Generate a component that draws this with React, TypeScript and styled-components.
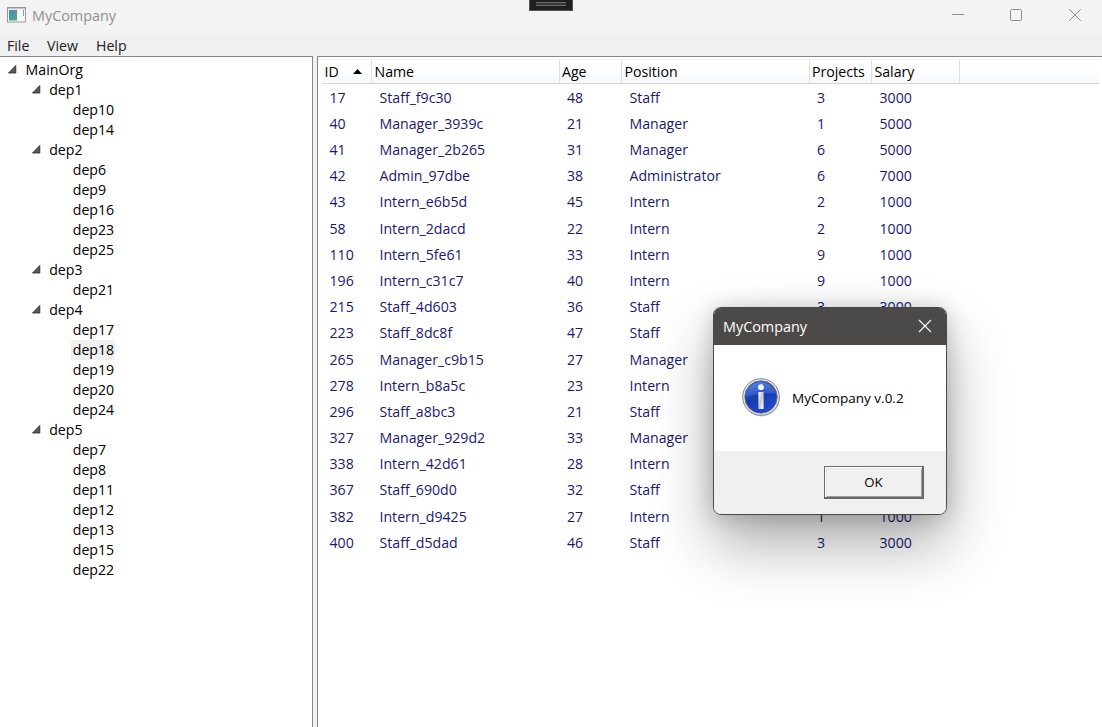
import React from "react";
import styled, { createGlobalStyle } from "styled-components";

const Global = createGlobalStyle`
  * { box-sizing: border-box; }
  html, body { margin: 0; padding: 0; overflow: hidden; }
  body { font-family: "Open Sans", "Noto Sans", sans-serif; font-size: 14.15px; color: #000; background: #f0f0f0; }
`;

const Window = styled.div`
  position: relative;
  display: flex;
  flex-direction: column;
  width: 1102px;
  height: 727px;
  overflow: hidden;
  background: #f0f0f0;
`;

const TitleBar = styled.header`
  display: flex;
  flex: 0 0 34px;
  height: 34px;
  padding-left: 7px;
  background: #f3f3f3;
  color: #919191;
`;

const AppIcon = styled.svg`
  display: block;
  flex: none;
  width: 19px;
  height: 16px;
  margin-top: 7px;
`;

const Title = styled.span`
  flex: 1;
  margin-left: 6px;
  line-height: 31px;
  font-size: 14.4px;
`;

const CaptionButtons = styled.div`
  display: flex;
  width: 176px;
  height: 30px;
  margin-right: -3px;
`;

const CaptionButton = styled.button<{ $width?: number }>`
  display: flex;
  align-items: center;
  justify-content: center;
  flex: 0 0 ${(p) => p.$width ?? 58}px;
  padding: 0;
  border: 0;
  background: none;
`;

const Glyph = styled.svg`
  display: block;
  width: 14px;
  height: 14px;
  fill: none;
`;

const DebugTab = styled.div`
  position: absolute;
  top: 0;
  left: 529px;
  width: 44px;
  height: 11px;
  padding: 2px 6px 0;
  border: 1px solid #555352;
  border-top: 0;
  background: #1f1f1f;
`;

const Grip = styled.div`
  height: 4px;
  border: solid #6c6c6c;
  border-width: 1px 0;
  background: #3a3a3a;
`;

const MenuBar = styled.nav`
  display: flex;
  flex: 0 0 22px;
  gap: 18px;
  height: 22px;
  padding-left: 7px;
  line-height: 23px;
  color: #212121;
`;

const MenuItem = styled.span<{ $width: number }>`
  width: ${(p) => p.$width}px;
  height: 22px;
  white-space: nowrap;
`;

const Body = styled.main`
  display: flex;
  flex: 1;
  min-height: 0;
  gap: 4px;
`;

const TreePane = styled.aside`
  flex: 0 0 313px;
  padding-top: 3px;
  border: solid #828790;
  border-width: 1px 1px 0 0;
  background: #fff;
`;

const TreeRow = styled.div<{ $level: number }>`
  display: flex;
  height: 20px;
  padding-left: ${(p) => 7 + p.$level * 23.6}px;
  line-height: 20px;
`;

const Expander = styled.svg`
  display: block;
  width: 16px;
  height: 20px;
  flex: none;
`;

const TreeLabel = styled.span<{ $selected?: boolean }>`
  height: 20px;
  margin-left: 1px;
  padding: 0 1px 0 1.6px;
  background: ${(p) => (p.$selected ? "#f0f0f0" : "transparent")};
`;

const ListPane = styled.section`
  flex: 1;
  min-width: 0;
  padding: 2px 3px 0 4px;
  border: solid #828790;
  border-width: 1px 0 0 1px;
  background: #fff;
`;

const columns = "50px 187.5px 62.5px 187.5px 62.5px 87.5px 1fr";

const HeaderRow = styled.div`
  display: grid;
  grid-template-columns: ${columns};
  height: 25px;
  border-top: 1px solid #f0f1f2;
  border-bottom: 1px solid #d5d5d5;
  background: linear-gradient(#fff 0%, #fff 40%, #f7f8fa 100%);
`;

const HeaderCell = styled.div<{ $last?: boolean }>`
  display: flex;
  align-items: center;
  padding-left: 2.5px;
  border-right: ${(p) => (p.$last ? 0 : "1px solid #dfe0e1")};
  line-height: 23px;
  white-space: nowrap;
`;

const SortArrow = styled.svg`
  display: block;
  width: 9px;
  height: 5px;
  margin-left: 14px;
`;

const Rows = styled.div`
  padding-top: 0.63px;
`;

const Row = styled.div`
  display: grid;
  grid-template-columns: ${columns};
  height: 26.2px;
  color: #191970;
  line-height: 26.5px;
`;

const Cell = styled.span`
  padding-left: 7.5px;
  white-space: nowrap;
`;

const Dialog = styled.div`
  position: absolute;
  top: 307px;
  left: 713px;
  display: flex;
  flex-direction: column;
  width: 234px;
  height: 208px;
  overflow: hidden;
  border: 1px solid #4c4a48;
  border-radius: 8px;
  background: #fff;
  box-shadow: 0 30px 60px rgba(0, 0, 0, 0.32), 0 2px 22px rgba(0, 0, 0, 0.2);
`;

const DialogTitle = styled.div`
  display: flex;
  flex: 0 0 37px;
  align-items: center;
  justify-content: space-between;
  padding: 0 14px 0 9px;
  background: #4c4a48;
  color: #fff;
  font-size: 14.4px;
`;

const DialogClose = styled(Glyph)`
  margin-bottom: 2px;
`;

const DialogContent = styled.div`
  display: flex;
  flex: 0 0 106px;
  align-items: center;
  padding-left: 27px;
  font-size: 13.5px;
`;

const InfoIcon = styled.svg`
  display: block;
  width: 40px;
  height: 40px;
  margin-bottom: 2px;
`;

const Message = styled.span`
  margin-left: 11px;
`;

const DialogFooter = styled.div`
  display: flex;
  flex: 1;
  justify-content: flex-end;
  padding: 15px 22px 0 0;
  background: #f0f0f0;
`;

const OkButton = styled.button`
  width: 100px;
  height: 33px;
  padding: 0 0 1px;
  border: solid #696969;
  border-width: 1px 2px 2px 1px;
  background: #f0f0f0;
  box-shadow: inset 1px 1px 0 #fff, inset 2px 2px 0 #e3e3e3, inset -1px -1px 0 #a0a0a0;
  color: #000;
  font: 13.2px "Open Sans", "Noto Sans", sans-serif;
`;

const tree: [string, string[]][] = [
  ["dep1", ["dep10", "dep14"]],
  ["dep2", ["dep6", "dep9", "dep16", "dep23", "dep25"]],
  ["dep3", ["dep21"]],
  ["dep4", ["dep17", "dep18", "dep19", "dep20", "dep24"]],
  ["dep5", ["dep7", "dep8", "dep11", "dep12", "dep13", "dep15", "dep22"]],
];

type Employee = [number, string, number, string, number?, number?];

const staff: Employee[] = [
  [17, "Staff_f9c30", 48, "Staff", 3, 3000],
  [40, "Manager_3939c", 21, "Manager", 1, 5000],
  [41, "Manager_2b265", 31, "Manager", 6, 5000],
  [42, "Admin_97dbe", 38, "Administrator", 6, 7000],
  [43, "Intern_e6b5d", 45, "Intern", 2, 1000],
  [58, "Intern_2dacd", 22, "Intern", 2, 1000],
  [110, "Intern_5fe61", 33, "Intern", 9, 1000],
  [196, "Intern_c31c7", 40, "Intern", 9, 1000],
  [215, "Staff_4d603", 36, "Staff", 3, 3000],
  [223, "Staff_8dc8f", 47, "Staff"],
  [265, "Manager_c9b15", 27, "Manager"],
  [278, "Intern_b8a5c", 23, "Intern"],
  [296, "Staff_a8bc3", 21, "Staff"],
  [327, "Manager_929d2", 33, "Manager"],
  [338, "Intern_42d61", 28, "Intern"],
  [367, "Staff_690d0", 32, "Staff"],
  [382, "Intern_d9425", 27, "Intern", 1, 1000],
  [400, "Staff_d5dad", 46, "Staff", 3, 3000],
];

function Arrow() {
  return (
    <Expander viewBox="0 0 16 20">
      <path d="M8.8 5.5V13H1.5Z" fill="#595959" stroke="#262626" strokeWidth="0.8" />
    </Expander>
  );
}

export default function App() {
  return (
    <Window>
      <Global />
      <TitleBar>
        <AppIcon viewBox="0 0 19 16">
          <defs>
            <linearGradient id="app" x1="0" y1="0" x2="1" y2="1">
              <stop offset="0" stopColor="#4d87b8" />
              <stop offset="1" stopColor="#50ad7c" />
            </linearGradient>
          </defs>
          <rect x="0.5" y="0.5" width="18" height="14.5" fill="#f7f8f9" stroke="#969a9e" />
          <path d="M1 1.7H18" stroke="#b9bdc2" />
          <rect x="2" y="3" width="8" height="10.5" fill="url(#app)" />
          <rect x="11" y="3" width="3.5" height="10.5" fill="#fff" />
          <path d="M16.5 3V9" stroke="#76a9a1" />
        </AppIcon>
        <Title>MyCompany</Title>
        <CaptionButtons>
          <CaptionButton aria-label="Minimize">
            <Glyph viewBox="0 0 14 14"><path d="M1 6.5H13" stroke="#8e8e8e" /></Glyph>
          </CaptionButton>
          <CaptionButton aria-label="Maximize">
            <Glyph viewBox="0 0 14 14"><rect x="1.5" y="1.5" width="11" height="11" rx="1" stroke="#8e8e8e" /></Glyph>
          </CaptionButton>
          <CaptionButton $width={60} aria-label="Close">
            <Glyph viewBox="0 0 14 14"><path d="M1.2 1.2L12.8 12.8M12.8 1.2L1.2 12.8" stroke="#8e8e8e" /></Glyph>
          </CaptionButton>
        </CaptionButtons>
      </TitleBar>
      <MenuBar>
        <MenuItem $width={22}>File</MenuItem>
        <MenuItem $width={31}>View</MenuItem>
        <MenuItem $width={31}>Help</MenuItem>
      </MenuBar>
      <Body>
        <TreePane>
          <TreeRow $level={0}><Arrow /><TreeLabel>MainOrg</TreeLabel></TreeRow>
          {tree.map(([name, children]) => (
            <React.Fragment key={name}>
              <TreeRow $level={1}><Arrow /><TreeLabel>{name}</TreeLabel></TreeRow>
              {children.map((c) => (
                <TreeRow key={c} $level={2}>
                  <Expander />
                  <TreeLabel $selected={c === "dep18"}>{c}</TreeLabel>
                </TreeRow>
              ))}
            </React.Fragment>
          ))}
        </TreePane>
        <ListPane>
          <HeaderRow>
            <HeaderCell>
              ID
              <SortArrow viewBox="0 0 9 5"><path d="M0 5L4.5 0L9 5Z" fill="#000" /></SortArrow>
            </HeaderCell>
            <HeaderCell>Name</HeaderCell>
            <HeaderCell>Age</HeaderCell>
            <HeaderCell>Position</HeaderCell>
            <HeaderCell>Projects</HeaderCell>
            <HeaderCell>Salary</HeaderCell>
            <HeaderCell $last />
          </HeaderRow>
          <Rows>
            {staff.map((row) => (
              <Row key={row[0]}>
                {row.map((value, i) => <Cell key={i}>{value}</Cell>)}
              </Row>
            ))}
          </Rows>
        </ListPane>
      </Body>
      <DebugTab><Grip /></DebugTab>
      <Dialog role="dialog">
        <DialogTitle>
          MyCompany
          <DialogClose viewBox="0 0 14 14"><path d="M1 1L13 13M13 1L1 13" stroke="#fff" strokeWidth="1.1" /></DialogClose>
        </DialogTitle>
        <DialogContent>
          <InfoIcon viewBox="0 0 40 40">
            <defs>
              <linearGradient id="blue" x1="0" y1="0" x2="0.6" y2="1">
                <stop offset="0" stopColor="#3e6be0" />
                <stop offset="0.5" stopColor="#173da8" />
                <stop offset="1" stopColor="#2246d0" />
              </linearGradient>
              <linearGradient id="gloss" x1="0" y1="0" x2="0" y2="1">
                <stop offset="0" stopColor="#6f95ee" />
                <stop offset="1" stopColor="#3059c8" />
              </linearGradient>
              <linearGradient id="bar" x1="0" y1="0" x2="1" y2="1">
                <stop offset="0" stopColor="#fff" />
                <stop offset="0.5" stopColor="#c8c8c8" />
                <stop offset="1" stopColor="#fff" />
              </linearGradient>
            </defs>
            <circle cx="20.6" cy="20.8" r="18.6" fill="#000" opacity="0.2" />
            <circle cx="20" cy="20" r="18.3" fill="#e9e9e9" stroke="#858585" />
            <circle cx="20" cy="20" r="16.2" fill="url(#blue)" stroke="#5b6684" strokeWidth="0.8" />
            <path d="M4.4 20A15.6 15.6 0 0 1 35 16.5C27 15.5 17 16.5 4.4 20Z" fill="url(#gloss)" opacity="0.65" />
            <circle cx="20" cy="10.2" r="2.9" fill="#fff" />
            <rect x="17.4" y="15" width="5.2" height="17" rx="0.6" fill="url(#bar)" />
          </InfoIcon>
          <Message>MyCompany v.0.2</Message>
        </DialogContent>
        <DialogFooter><OkButton>OK</OkButton></DialogFooter>
      </Dialog>
    </Window>
  );
}
